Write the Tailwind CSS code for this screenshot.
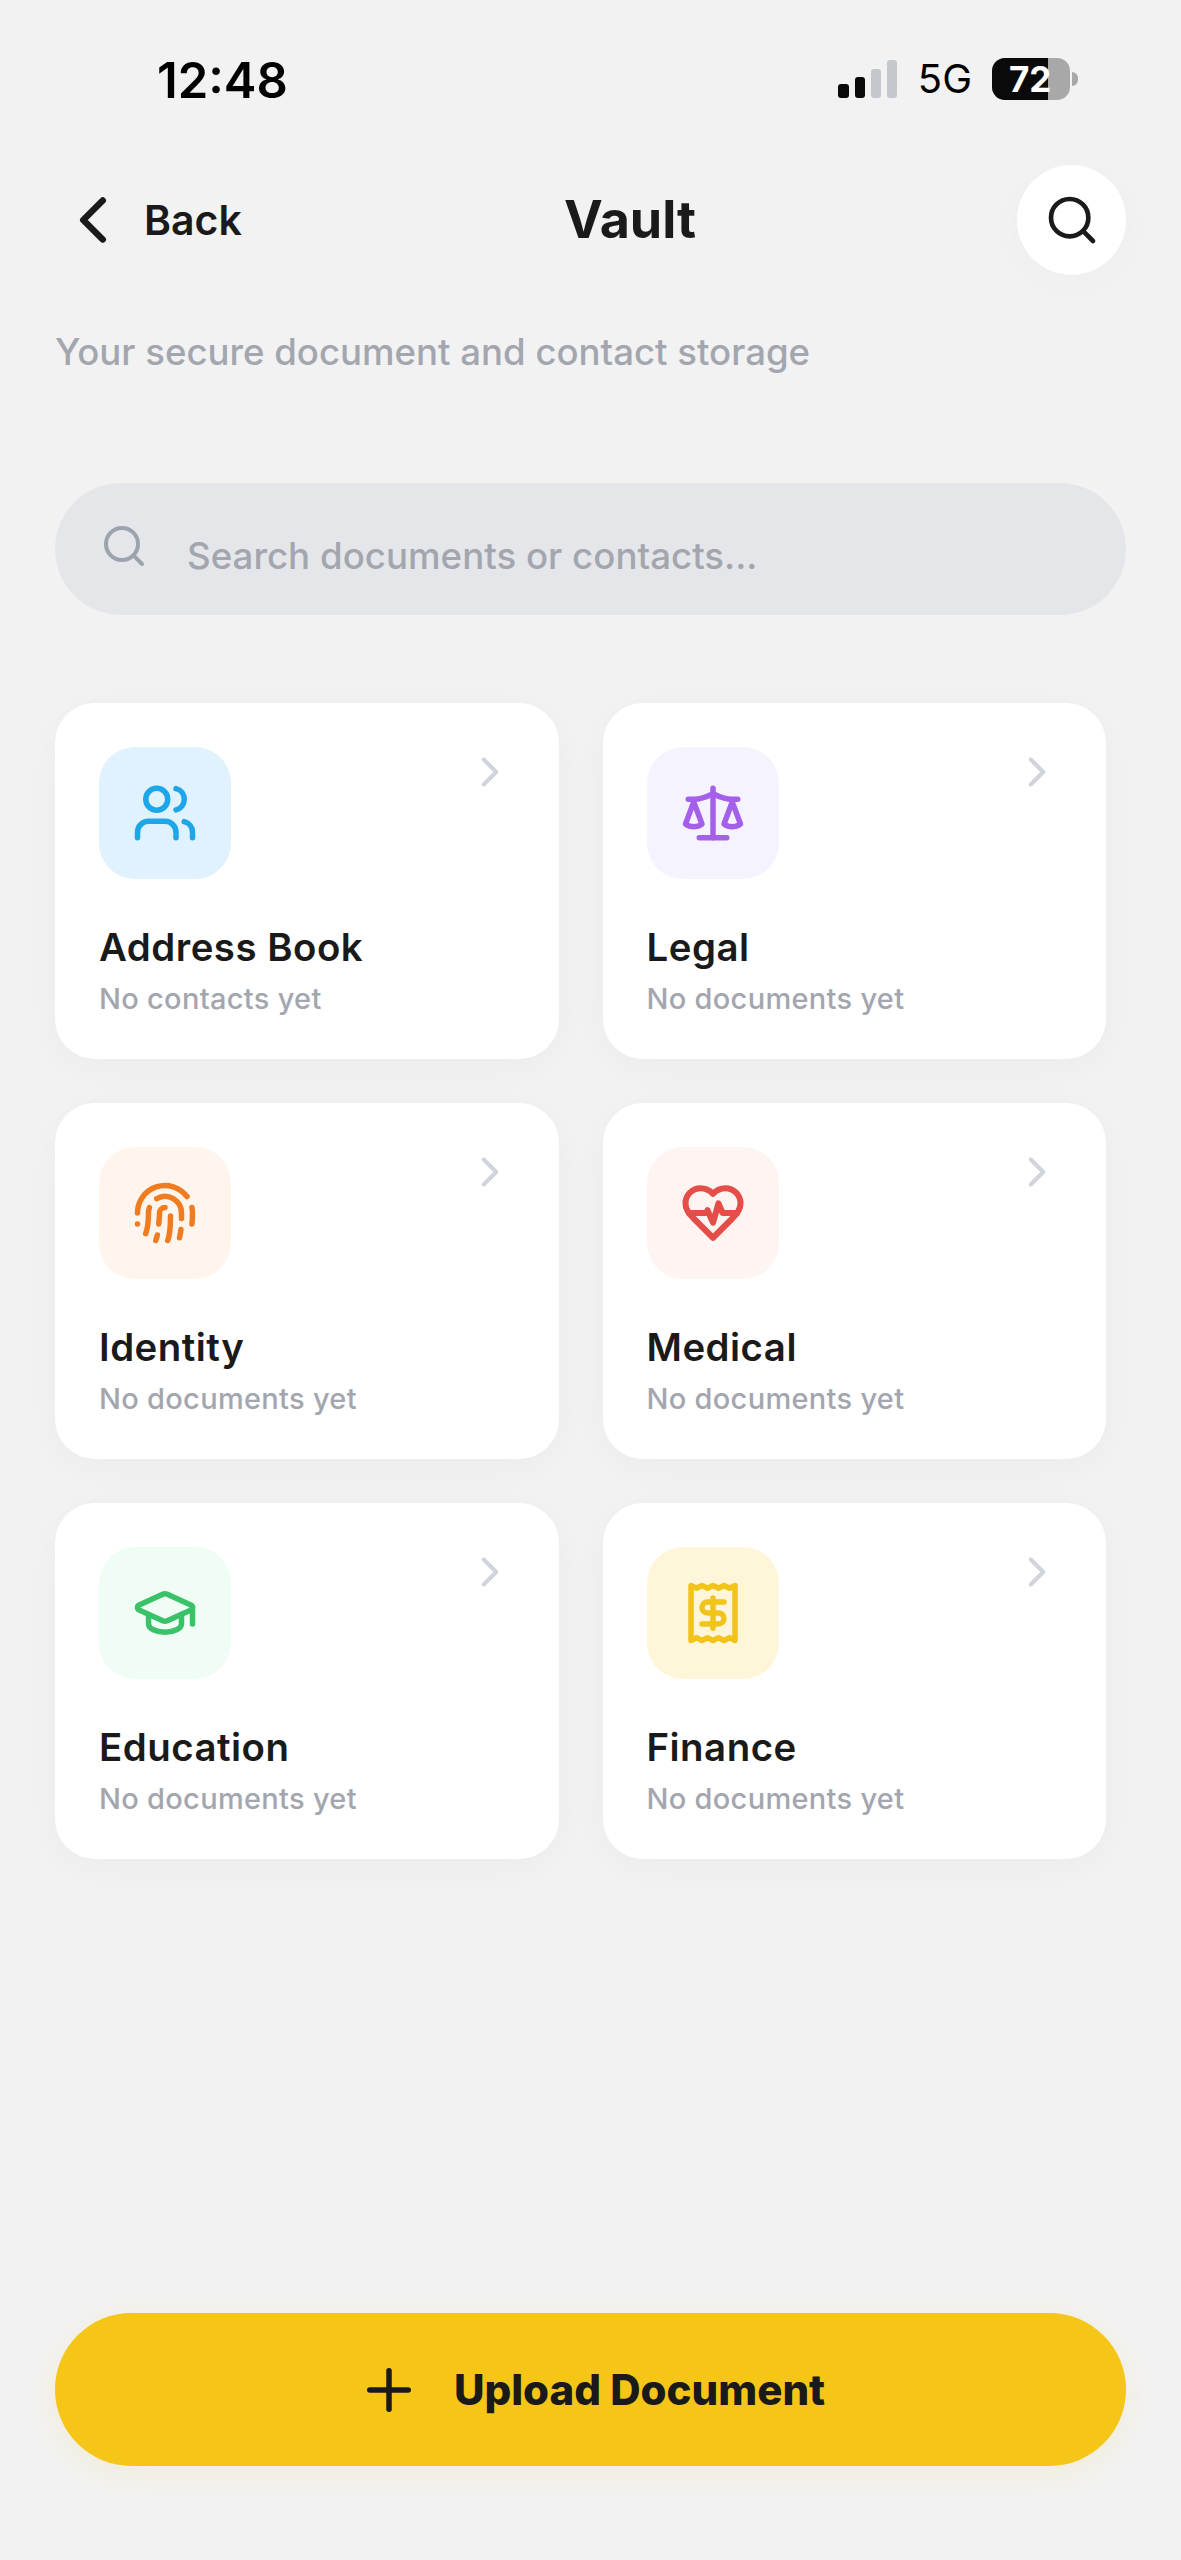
<!DOCTYPE html>
<html lang="en">
<head>
  <meta charset="UTF-8">
  <title>Vault</title>
  <script src="https://cdn.jsdelivr.net/npm/@tailwindcss/browser@4"></script>
</head>
<body class="bg-[#f2f2f2] font-['Inter',sans-serif] text-[#1a1a1a]">
  <div class="h-[2560px] flex flex-col px-[55px] overflow-hidden">

    <!-- status bar -->
    <div class="flex justify-between items-center h-[42px] mt-[58px] pl-[102px] pr-[48px]">
      <span class="text-[49px] leading-none font-semibold text-black mt-[2px]">12:48</span>
      <div class="flex items-center">
        <div class="flex items-end gap-[6px] h-[38px]">
          <div class="w-[11px] h-[14px] rounded-[3px] bg-[#0a0a0a]"></div>
          <div class="w-[10px] h-[21px] rounded-[3px] bg-[#0a0a0a]"></div>
          <div class="w-[10px] h-[29px] rounded-[3px] bg-[#c4c7cc]"></div>
          <div class="w-[10px] h-[38px] rounded-[3px] bg-[#c4c7cc]"></div>
        </div>
        <span class="ml-[21px] text-[40px] leading-none font-normal text-black">5G</span>
        <div class="relative ml-[20px] w-[78px] h-[42px] rounded-[13px] bg-[#a8a8a8] overflow-hidden">
          <div class="h-full w-[56px] bg-[#0a0a0a]"></div>
          <span class="absolute left-[17px] top-[3px] text-[35px] leading-[36px] font-bold text-white">72</span>
        </div>
        <div class="w-[6px] h-[14px] ml-[2px] rounded-r-full bg-[#a8a8a8]"></div>
      </div>
    </div>

    <!-- header -->
    <div class="flex justify-between items-center mt-[65px]">
      <div class="flex items-center w-[188px]">
        <svg class="w-[78px] h-[78px] shrink-0 -ml-[1px]" viewBox="0 0 24 24" fill="none" stroke="#1a1a1a" stroke-width="2" stroke-linecap="round" stroke-linejoin="round"><path d="m15 18-6-6 6-6"/></svg>
        <span class="text-[41px] leading-none font-semibold ml-[12px]">Back</span>
      </div>
      <h1 class="text-[52px] leading-none font-bold">Vault</h1>
      <div class="w-[109px] h-[110px] rounded-full bg-white flex items-center justify-center shadow-[0_8px_50px_rgba(0,0,0,0.025)]">
        <svg class="w-[56px] h-[56px]" viewBox="0 0 24 24" fill="none" stroke="#1a1a1a" stroke-width="2" stroke-linecap="round" stroke-linejoin="round"><circle cx="11" cy="11" r="8"/><path d="m21 21-4.3-4.3"/></svg>
      </div>
    </div>

    <p class="mt-[53px] text-[36.6px] leading-[48px] font-medium text-[#a3a6af]">Your secure document and contact storage</p>

    <!-- search -->
    <div class="mt-[107px] h-[132px] rounded-full bg-[#e5e6e9] flex items-center pl-[45px]">
      <svg class="w-[48px] h-[48px] shrink-0 -mt-[6px]" viewBox="0 0 24 24" fill="none" stroke="#9ca3af" stroke-width="2" stroke-linecap="round" stroke-linejoin="round"><circle cx="11" cy="11" r="8"/><path d="m21 21-4.3-4.3"/></svg>
      <span class="ml-[39px] mt-[13px] text-[36.7px] font-medium text-[#a3a6af]">Search documents or contacts...</span>
    </div>

    <!-- categories -->
    <div class="mt-[88px] w-[1051px] grid grid-cols-2 gap-x-[44px] gap-y-[44px]">

      <div class="relative h-[356px] rounded-[40px] bg-white p-[44px] shadow-[0_8px_40px_rgba(0,0,0,0.03)]">
        <svg class="absolute right-[44px] top-[44px] w-[50px] h-[50px]" viewBox="0 0 24 24" fill="none" stroke="#d1d5db" stroke-width="2" stroke-linecap="round" stroke-linejoin="round"><path d="m9 18 6-6-6-6"/></svg>
        <div class="w-[132px] h-[132px] rounded-[36px] bg-[#e0f2fe] flex items-center justify-center">
          <svg class="w-[66px] h-[66px]" viewBox="0 0 24 24" fill="none" stroke="#1ea7e8" stroke-width="2" stroke-linecap="round" stroke-linejoin="round"><path d="M16 21v-2a4 4 0 0 0-4-4H6a4 4 0 0 0-4 4v2"/><circle cx="9" cy="7" r="4"/><path d="M22 21v-2a4 4 0 0 0-3-3.87"/><path d="M16 3.13a4 4 0 0 1 0 7.75"/></svg>
        </div>
        <h2 class="mt-[46px] text-[38.4px] tracking-[0.5px] leading-[44px] font-semibold">Address Book</h2>
        <p class="mt-[12px] text-[29px] tracking-[0.3px] leading-[36px] font-medium text-[#a3a6af]">No contacts yet</p>
      </div>

      <div class="relative h-[356px] rounded-[40px] bg-white p-[44px] shadow-[0_8px_40px_rgba(0,0,0,0.03)]">
        <svg class="absolute right-[44px] top-[44px] w-[50px] h-[50px]" viewBox="0 0 24 24" fill="none" stroke="#d1d5db" stroke-width="2" stroke-linecap="round" stroke-linejoin="round"><path d="m9 18 6-6-6-6"/></svg>
        <div class="w-[132px] h-[132px] rounded-[36px] bg-[#f5f3ff] flex items-center justify-center">
          <svg class="w-[66px] h-[66px]" viewBox="0 0 24 24" fill="none" stroke="#a560ea" stroke-width="2" stroke-linecap="round" stroke-linejoin="round"><path d="m16 16 3-8 3 8c-.87.65-1.92 1-3 1s-2.13-.35-3-1Z"/><path d="m2 16 3-8 3 8c-.87.65-1.92 1-3 1s-2.13-.35-3-1Z"/><path d="M7 21h10"/><path d="M12 3v18"/><path d="M3 7h2c2 0 5-1 7-2 2 1 5 2 7 2h2"/></svg>
        </div>
        <h2 class="mt-[46px] text-[38.4px] tracking-[0.5px] leading-[44px] font-semibold">Legal</h2>
        <p class="mt-[12px] text-[29px] tracking-[0.3px] leading-[36px] font-medium text-[#a3a6af]">No documents yet</p>
      </div>

      <div class="relative h-[356px] rounded-[40px] bg-white p-[44px] shadow-[0_8px_40px_rgba(0,0,0,0.03)]">
        <svg class="absolute right-[44px] top-[44px] w-[50px] h-[50px]" viewBox="0 0 24 24" fill="none" stroke="#d1d5db" stroke-width="2" stroke-linecap="round" stroke-linejoin="round"><path d="m9 18 6-6-6-6"/></svg>
        <div class="w-[132px] h-[132px] rounded-[36px] bg-[#fff5ed] flex items-center justify-center">
          <svg class="w-[66px] h-[66px]" viewBox="0 0 24 24" fill="none" stroke="#f07c22" stroke-width="2" stroke-linecap="round" stroke-linejoin="round"><path d="M12 10a2 2 0 0 0-2 2c0 1.02-.1 2.51-.26 4"/><path d="M14 13.12c0 2.38 0 6.38-1 8.88"/><path d="M17.29 21.02c.12-.6.43-2.3.5-3.02"/><path d="M2 12a10 10 0 0 1 18-6"/><path d="M2 16h.01"/><path d="M21.8 16c.2-2 .131-5.354 0-6"/><path d="M5 19.5C5.5 18 6 15 6 12a6 6 0 0 1 .34-2"/><path d="M8.65 22c.21-.66.45-1.32.57-2"/><path d="M9 6.8a6 6 0 0 1 9 5.2v2"/></svg>
        </div>
        <h2 class="mt-[46px] text-[38.4px] tracking-[0.5px] leading-[44px] font-semibold">Identity</h2>
        <p class="mt-[12px] text-[29px] tracking-[0.3px] leading-[36px] font-medium text-[#a3a6af]">No documents yet</p>
      </div>

      <div class="relative h-[356px] rounded-[40px] bg-white p-[44px] shadow-[0_8px_40px_rgba(0,0,0,0.03)]">
        <svg class="absolute right-[44px] top-[44px] w-[50px] h-[50px]" viewBox="0 0 24 24" fill="none" stroke="#d1d5db" stroke-width="2" stroke-linecap="round" stroke-linejoin="round"><path d="m9 18 6-6-6-6"/></svg>
        <div class="w-[132px] h-[132px] rounded-[36px] bg-[#fef4f2] flex items-center justify-center">
          <svg class="w-[66px] h-[66px]" viewBox="0 0 24 24" fill="none" stroke="#e54d48" stroke-width="2.2" stroke-linecap="round" stroke-linejoin="round"><path d="M19 14c1.49-1.46 3-3.21 3-5.5A5.5 5.5 0 0 0 16.5 3c-1.76 0-3 .5-4.5 2-1.5-1.5-2.74-2-4.5-2A5.5 5.5 0 0 0 2 8.5c0 2.3 1.5 4.05 3 5.5l7 7Z"/><path d="M3.22 12H9.5l.5-1 2 4.5 2-7 1.5 3.5h5.27"/></svg>
        </div>
        <h2 class="mt-[46px] text-[38.4px] tracking-[0.5px] leading-[44px] font-semibold">Medical</h2>
        <p class="mt-[12px] text-[29px] tracking-[0.3px] leading-[36px] font-medium text-[#a3a6af]">No documents yet</p>
      </div>

      <div class="relative h-[356px] rounded-[40px] bg-white p-[44px] shadow-[0_8px_40px_rgba(0,0,0,0.03)]">
        <svg class="absolute right-[44px] top-[44px] w-[50px] h-[50px]" viewBox="0 0 24 24" fill="none" stroke="#d1d5db" stroke-width="2" stroke-linecap="round" stroke-linejoin="round"><path d="m9 18 6-6-6-6"/></svg>
        <div class="w-[132px] h-[132px] rounded-[36px] bg-[#f0fdf5] flex items-center justify-center">
          <svg class="w-[66px] h-[66px]" viewBox="0 0 24 24" fill="none" stroke="#39c268" stroke-width="2" stroke-linecap="round" stroke-linejoin="round"><path d="M21.42 10.922a1 1 0 0 0-.019-1.838L12.83 5.18a2 2 0 0 0-1.66 0L2.6 9.08a1 1 0 0 0 0 1.832l8.57 3.908a2 2 0 0 0 1.66 0z"/><path d="M22 10v6"/><path d="M6 12.5V16a6 3 0 0 0 12 0v-3.5"/></svg>
        </div>
        <h2 class="mt-[46px] text-[38.4px] tracking-[0.5px] leading-[44px] font-semibold">Education</h2>
        <p class="mt-[12px] text-[29px] tracking-[0.3px] leading-[36px] font-medium text-[#a3a6af]">No documents yet</p>
      </div>

      <div class="relative h-[356px] rounded-[40px] bg-white p-[44px] shadow-[0_8px_40px_rgba(0,0,0,0.03)]">
        <svg class="absolute right-[44px] top-[44px] w-[50px] h-[50px]" viewBox="0 0 24 24" fill="none" stroke="#d1d5db" stroke-width="2" stroke-linecap="round" stroke-linejoin="round"><path d="m9 18 6-6-6-6"/></svg>
        <div class="w-[132px] h-[132px] rounded-[36px] bg-[#fff6d9] flex items-center justify-center">
          <svg class="w-[66px] h-[66px]" viewBox="0 0 24 24" fill="none" stroke="#f0c419" stroke-width="2" stroke-linecap="round" stroke-linejoin="round"><path d="M4 2v20l2-1 2 1 2-1 2 1 2-1 2 1 2-1 2 1V2l-2 1-2-1-2 1-2-1-2 1-2-1-2 1Z"/><path d="M16 8h-6a2 2 0 1 0 0 4h4a2 2 0 1 1 0 4H8"/><path d="M12 17.5v-11"/></svg>
        </div>
        <h2 class="mt-[46px] text-[38.4px] tracking-[0.5px] leading-[44px] font-semibold">Finance</h2>
        <p class="mt-[12px] text-[29px] tracking-[0.3px] leading-[36px] font-medium text-[#a3a6af]">No documents yet</p>
      </div>
    </div>

    <!-- upload -->
    <div class="mt-auto mb-[94px] h-[153px] rounded-full bg-[#f5c518] flex items-center justify-center shadow-[0_8px_32px_rgba(245,197,24,0.12)]">
      <svg class="w-[66px] h-[66px]" viewBox="0 0 24 24" fill="none" stroke="#1a1a1a" stroke-width="2" stroke-linecap="round" stroke-linejoin="round"><path d="M5 12h14"/><path d="M12 5v14"/></svg>
      <span class="ml-[32px] text-[42px] leading-none font-extrabold">Upload Document</span>
    </div>
  </div>
</body>
</html>
